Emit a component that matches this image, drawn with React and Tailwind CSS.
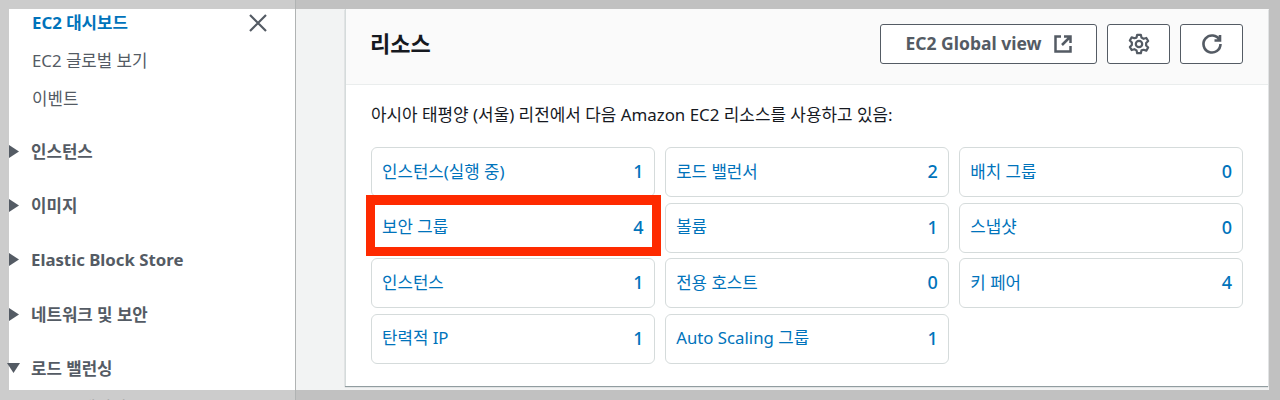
const font = { fontFamily: '"Noto Sans", "Noto Sans CJK KR", sans-serif' };

const resources = [
  ["인스턴스(실행 중)", 1],
  ["로드 밸런서", 2],
  ["배치 그룹", 0],
  ["보안 그룹", 4, true],
  ["볼륨", 1],
  ["스냅샷", 0],
  ["인스턴스", 1],
  ["전용 호스트", 0],
  ["키 페어", 4],
  ["탄력적 IP", 1],
  ["Auto Scaling 그룹", 1],
];

const Group = ({ label, open, className = "" }) => (
  <div className={`relative flex items-center h-[24px] pl-[22px] text-[16.800px] font-bold text-[#545b64] ${className}`}>
    {open ? (
      <svg className="absolute -left-[2px] top-[6px]" width="13" height="10" viewBox="0 0 13 10">
        <path d="M0 0h13L6.500 10z" fill="#545b64" />
      </svg>
    ) : (
      <svg className="absolute left-0 top-[5px]" width="10" height="13" viewBox="0 0 10 13">
        <path d="M0 0l10 6.500L0 13z" fill="#545b64" />
      </svg>
    )}
    {label}
  </div>
);

const Sidebar = () => (
  <div className="w-[286px] h-[381px] bg-white pl-[23px] pt-[1px] relative">
    <div className="h-[26px] flex items-center text-[16.800px] font-bold text-[#0073bb]">EC2 대시보드</div>
    <div className="h-[26px] mt-[12px] flex items-center text-[16.800px] text-[#545b64]">EC2 글로벌 보기</div>
    <div className="h-[26px] mt-[12px] flex items-center text-[16.800px] text-[#545b64]">이벤트</div>
    <div className="-ml-[23px]">
      <Group label="인스턴스" className="mt-[28px]" />
      <Group label="이미지" className="mt-[30px]" />
      <Group label="Elastic Block Store" className="mt-[30px]" />
      <Group label="네트워크 및 보안" className="mt-[31px]" />
      <Group label="로드 밸런싱" open className="mt-[30px]" />
    </div>
    <svg className="absolute left-[239px] top-[4px]" width="20" height="20" viewBox="0 0 20 20" fill="none" stroke="#545b64" strokeWidth="2.200">
      <path d="M2 2l16 16M18 2L2 18" />
    </svg>
  </div>
);

const HeaderButton = ({ children, className = "" }) => (
  <button className={`h-[40px] flex items-center justify-center border border-[#545b64] rounded-[3px] bg-white text-[17.500px] font-bold text-[#545b64] ${className}`}>
    {children}
  </button>
);

const ResourceCard = ({ label, count, highlight }) => (
  <div className="relative h-[50px] flex items-center justify-between border border-[#d5dbdb] rounded-[6px] bg-white pl-[10px] pr-[10px] pb-[1px] text-[16.800px] text-[#0073bb]">
    <span>{label}</span>
    <span className="text-[18px] font-medium">{count}</span>
    {highlight && <div className="absolute -left-[6px] -right-[7px] -top-[9px] -bottom-[4px] border-[9px] border-t-[10px] border-[#fe2a00]" />}
  </div>
);

export default function App() {
  return (
    <div className="w-[1280px] h-[400px] flex overflow-hidden" style={font}>
      <div className="w-[295px] h-[400px] bg-[#cccccc] pl-[9px] pt-[9px] shrink-0 overflow-hidden">
        <Sidebar />
        <div className="h-[26px] mt-[5px] pl-[36px] flex items-center text-[16.800px] text-[#8f8f8f]">로드 밸런서</div>
      </div>
      <div className="w-[1px] h-[400px] bg-[#b0b3b3] shrink-0" />
      <div className="flex-1 h-[400px] bg-[#c1c1c1] pt-[9px] pb-[10px] pr-[11px]">
        <div className="h-[381px] bg-[#f2f3f3] pl-[49px] pr-[1px]">
          <div className="h-[377px] bg-white border-l border-[#d5dbdb] shadow-[0_1px_1px_0_rgba(0,28,36,0.4)]">
            <div className="h-[76px] bg-[#fafafa] border-b border-[#eaeded] flex items-center justify-between pl-[24px] pr-[25px] pb-[6px]">
              <h2 className="text-[22px] font-bold text-[#16191f] -mt-[1px]">리소스</h2>
              <div className="flex gap-[10px]">
                <HeaderButton className="w-[217px] gap-[12px]">
                  EC2 Global view
                  <svg width="18" height="18" viewBox="0 0 18 18" fill="none" stroke="#545b64" strokeWidth="2.500">
                    <path d="M7 1.500H1.500v15h15V11M10 1.500h6.500V8M16 2L8 10" />
                  </svg>
                </HeaderButton>
                <HeaderButton className="w-[63px]">
                  <svg width="22" height="22" viewBox="0 0 24 24" fill="none" stroke="#545b64" strokeWidth="2.400" strokeLinejoin="round">
                    <path d="M10 2h4l.7 3 2.300 1.300 3-.9 2 3.400-2.200 2.200v2.600l2.200 2.200-2 3.400-3-.9L14.700 19 14 22h-4l-.7-3L7 17.700l-3 .9-2-3.400 2.200-2.200v-2.600L2 8.200l2-3.400 3 .9L9.300 5z" />
                    <circle cx="12" cy="12" r="3.500" />
                  </svg>
                </HeaderButton>
                <HeaderButton className="w-[63px]">
                  <svg width="22" height="22" viewBox="0 0 22 22" fill="none" stroke="#545b64" strokeWidth="2.600">
                    <path d="M18.500 7A8.500 8.500 0 1 0 19.500 11M19 2v5.500h-5.500" />
                  </svg>
                </HeaderButton>
              </div>
            </div>
            <div className="pl-[25px] pr-[25px]">
              <p className="h-[24px] mt-[18px] flex items-center text-[16.900px] text-[#16191f]">아시아 태평양 (서울) 리전에서 다음 Amazon EC2 리소스를 사용하고 있음:</p>
              <div className="grid grid-cols-3 gap-x-[10.500px] gap-y-[5.500px] mt-[20px] w-[872px]">
                {resources.map(([label, count, highlight]) => (
                  <ResourceCard key={label} label={label} count={count} highlight={highlight} />
                ))}
              </div>
            </div>
          </div>
        </div>
      </div>
    </div>
  );
}
